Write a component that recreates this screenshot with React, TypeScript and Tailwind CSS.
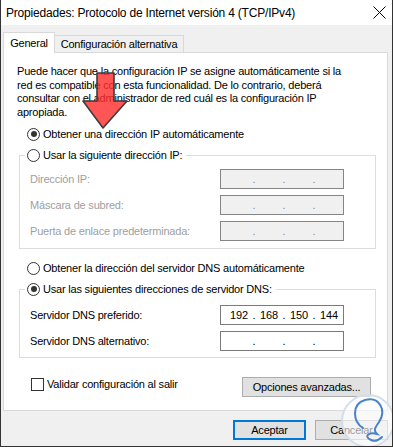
import React from 'react';

const Radio = ({ checked = false }: { checked?: boolean }) => (
  <span className="w-[13px] h-[13px] rounded-full border border-[#333333] bg-white flex items-center justify-center shrink-0">
    {checked && <span className="w-[6px] h-[6px] rounded-full bg-[#333333]" />}
  </span>
);

interface IpBoxProps {
  values?: string[];
  disabled?: boolean;
}

const IpBox = ({ values = ['', '', '', ''], disabled = false }: IpBoxProps) => (
  <div
    className={`w-[124px] h-[20px] border flex items-center pl-[4px] ${
      disabled ? 'bg-[#f0f0f0] border-[#858585] text-[#8a8a8a]' : 'bg-white border-[#7a7a7a] text-black'
    }`}
  >
    {values.map((v, i) => (
      <React.Fragment key={i}>
        <span className="w-[28px] text-center">{v}</span>
        {i < 3 && <span className="w-[2px] flex justify-center">.</span>}
      </React.Fragment>
    ))}
  </div>
);

const FieldRow = ({ label, disabled, values }: { label: string; disabled?: boolean; values?: string[] }) => (
  <div className="h-[20px] flex items-center">
    <span className={`w-[200px] pl-[10px] ${disabled ? 'text-[#a0a0a0]' : 'text-black'}`}>{label}</span>
    <IpBox disabled={disabled} values={values} />
  </div>
);

const Arrow = () => (
  <svg className="absolute left-0 top-0 pointer-events-none" width="393" height="447" viewBox="0 0 393 447">
    <polygon
      points="96,73 113,73 113,101 126,101 102,128 82,101 96,101"
      fill="#ff3030"
      fillOpacity="0.82"
      stroke="#3d3d3d"
      strokeWidth="1.6"
      strokeLinejoin="round"
    />
  </svg>
);

const Watermark = () => (
  <svg className="absolute left-0 top-0 pointer-events-none" width="393" height="447" viewBox="0 0 393 447">
    <circle cx="367" cy="421" r="26" fill="#ffffff" fillOpacity="0.6" stroke="#d3deea" strokeWidth="2" />
    <path
      d="M362 428 C352 422 350 404 364 400 C378 396 386 410 378 422 C374 428 372 430 376 434 C368 432 362 436 370 440 C374 442 378 440 381 437"
      fill="none"
      stroke="#4a82c8"
      strokeWidth="2"
      strokeLinecap="round"
    />
  </svg>
);

export default function App() {
  return (
    <div className="relative w-[393px] h-[447px] overflow-hidden bg-[#f0f0f0] border-x border-b border-[#333333] font-['Liberation_Sans',Arial,sans-serif] text-[11px] tracking-[-0.2px] text-black leading-[16px]">
      {/* title bar */}
      <div className="h-[25px] bg-white flex items-center pl-[5px] pr-[6px]">
        <span className="text-[12px] tracking-[-0.2px]">Propiedades: Protocolo de Internet versión 4 (TCP/IPv4)</span>
        <svg className="ml-auto" width="13" height="13" viewBox="0 0 13 13">
          <path d="M0.5 0.5 L12.5 12.5 M12.5 0.5 L0.5 12.5" stroke="#000" strokeWidth="1" />
        </svg>
      </div>

      {/* tabs */}
      <div className="flex items-end pt-[7px] pl-[2px] h-[27px]">
        <div className="relative z-10 -mb-px h-[21px] w-[52px] bg-white border-x border-t border-[#d9d9d9] flex items-center justify-center">
          General
        </div>
        <div className="h-[17px] w-[129px] border-r border-t border-[#d9d9d9] flex items-center justify-center">
          Configuración alternativa
        </div>
      </div>

      {/* panel */}
      <div className="ml-[2px] w-[385px] h-[359px] bg-white border border-[#d9d9d9] flex flex-col">
        <p className="pl-[13px] pt-[12px] leading-[13.5px] whitespace-nowrap">
          <span className="block">Puede hacer que la configuración IP se asigne automáticamente si la</span>
          <span className="block">red es compatible con esta funcionalidad. De lo contrario, deberá</span>
          <span className="block">consultar con el administrador de red cuál es la configuración IP</span>
          <span className="block">apropiada.</span>
        </p>

        <label className="mt-[7px] pl-[23px] h-[16px] flex items-center gap-[3px]">
          <Radio checked />
          <span>Obtener una dirección IP automáticamente</span>
        </label>

        <fieldset className="mt-[5px] ml-[15px] w-[357px] border border-[#dcdcdc] pb-[7px]">
          <legend className="ml-[5px] pl-[2px] pr-[4px] h-[16px] flex items-center gap-[3px]">
            <Radio />
            <span>Usar la siguiente dirección IP:</span>
          </legend>
          <div className="pt-[6px] flex flex-col gap-[6px]">
            <FieldRow label="Dirección IP:" disabled />
            <FieldRow label="Máscara de subred:" disabled />
            <FieldRow label="Puerta de enlace predeterminada:" disabled />
          </div>
        </fieldset>

        <label className="mt-[11px] pl-[23px] h-[16px] flex items-center gap-[3px]">
          <Radio />
          <span>Obtener la dirección del servidor DNS automáticamente</span>
        </label>

        <fieldset className="mt-[5px] ml-[15px] w-[357px] border border-[#dcdcdc] pb-[6px]">
          <legend className="ml-[5px] pl-[2px] pr-[4px] h-[16px] flex items-center gap-[3px]">
            <Radio checked />
            <span>Usar las siguientes direcciones de servidor DNS:</span>
          </legend>
          <div className="pt-[8px] flex flex-col gap-[6px]">
            <FieldRow label="Servidor DNS preferido:" values={['192', '168', '150', '144']} />
            <FieldRow label="Servidor DNS alternativo:" />
          </div>
        </fieldset>

        <div className="mt-[19px] pl-[27px] pr-[16px] flex items-start">
          <span className="mt-px w-[13px] h-[13px] border border-[#333333] bg-white shrink-0" />
          <span className="ml-[3px] leading-[15px]">Validar configuración al salir</span>
          <button className="ml-auto w-[129px] h-[20px] bg-[#e1e1e1] border border-[#adadad] flex items-center justify-center">
            Opciones avanzadas...
          </button>
        </div>
      </div>

      {/* dialog buttons */}
      <div className="mt-[9px] pr-[4px] flex justify-end gap-[9px]">
        <button className="w-[73px] h-[20px] bg-[#e1e1e1] border-2 border-[#0078d7] flex items-center justify-center">
          Aceptar
        </button>
        <button className="w-[73px] h-[20px] bg-[#e1e1e1] border border-[#adadad] flex items-center justify-center">
          Cancelar
        </button>
      </div>

      <Arrow />
      <Watermark />
    </div>
  );
}
